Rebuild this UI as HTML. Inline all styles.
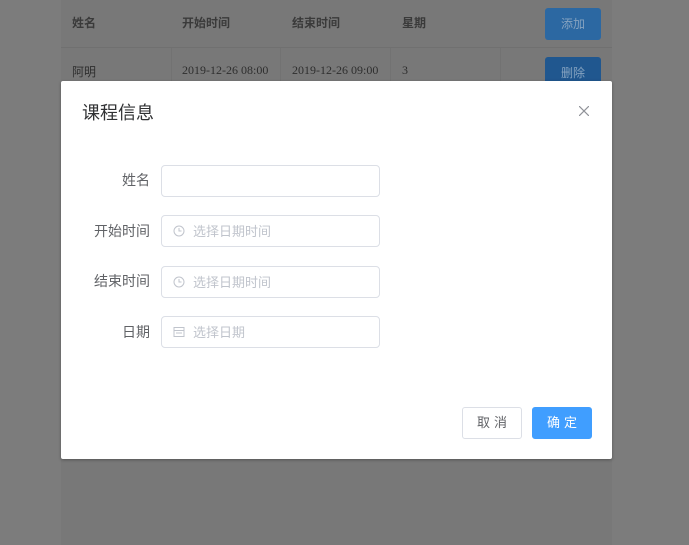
<!DOCTYPE html>
<html><head><meta charset="utf-8"><style>
body{margin:0;width:689px;height:545px;background:#7c7c7c;position:relative;overflow:hidden;font-family:"Liberation Sans","Noto Sans CJK SC",sans-serif;}
.tbl{position:absolute;left:61px;top:0;width:551px;height:545px;background:#787878;}
.th{position:absolute;top:14px;font-size:12px;font-weight:bold;color:#3a3a3a;}
.row{position:absolute;left:0;top:47px;width:551px;height:40px;border-top:1px solid #707070;}
.cell{position:absolute;top:48px;height:40px;border-left:1px solid #727272;}
.td{position:absolute;top:63px;font-size:12px;color:#2e2e2e;font-family:"Liberation Serif","Noto Serif CJK SC",serif;}
.tbtn{position:absolute;left:545px;width:56px;height:32px;border-radius:3px;color:#86a3c0;font-size:12px;text-align:center;line-height:32px;}
.dlg{position:absolute;left:61px;top:81px;width:551px;height:378px;background:#fff;border-radius:2px;box-shadow:0 1px 3px rgba(0,0,0,.3);}
.title{position:absolute;left:21px;top:18px;font-size:18px;color:#303133;}
.lbl{position:absolute;right:462px;font-size:14px;color:#606266;}
.inp{position:absolute;left:100px;width:217px;height:30px;border:1px solid #dcdfe6;border-radius:4px;}
.ph{position:absolute;left:31px;top:5px;font-size:13px;color:#c0c4cc;}
.btn{position:absolute;top:326px;height:30px;border-radius:3px;font-size:13px;text-align:center;line-height:30px;letter-spacing:4px;text-indent:4px;}
</style></head><body>
<div class="tbl">
<div class="th" style="left:11px">姓名</div>
<div class="th" style="left:121px">开始时间</div>
<div class="th" style="left:231px">结束时间</div>
<div class="th" style="left:341px">星期</div>
<div class="row"></div>
<div class="cell" style="left:110px"></div><div class="cell" style="left:219px"></div><div class="cell" style="left:329px"></div><div class="cell" style="left:439px"></div>
<div class="td" style="left:11px;font-family:'Liberation Sans','Noto Sans CJK SC',sans-serif">阿明</div>
<div class="td" style="left:121px">2019-12-26 08:00</div>
<div class="td" style="left:231px">2019-12-26 09:00</div>
<div class="td" style="left:341px">3</div>
</div>
<div class="tbtn" style="top:8px;background:#2c68a2">添加</div>
<div class="tbtn" style="top:57px;background:#20578f">删除</div>
<div class="dlg">
<div class="title">课程信息</div>
<svg style="position:absolute;left:518px;top:25px" width="10" height="10"><path d="M0 0L10 10M10 0L0 10" stroke="#909399" stroke-width="1.2"/></svg>
<div class="lbl" style="top:89px">姓名</div>
<div class="inp" style="top:84px"></div>
<div class="lbl" style="top:140px">开始时间</div>
<div class="inp" style="top:134px"><svg style="position:absolute;left:11px;top:9px" width="12" height="12"><circle cx="6" cy="6" r="5" fill="none" stroke="#c0c4cc"/><path d="M6 3V6H8.5" fill="none" stroke="#c0c4cc"/></svg><span class="ph">选择日期时间</span></div>
<div class="lbl" style="top:190px">结束时间</div>
<div class="inp" style="top:185px"><svg style="position:absolute;left:11px;top:9px" width="12" height="12"><circle cx="6" cy="6" r="5" fill="none" stroke="#c0c4cc"/><path d="M6 3V6H8.5" fill="none" stroke="#c0c4cc"/></svg><span class="ph">选择日期时间</span></div>
<div class="lbl" style="top:241px">日期</div>
<div class="inp" style="top:235px"><svg style="position:absolute;left:11px;top:9px" width="12" height="12"><rect x="1" y="1.5" width="10" height="9" fill="none" stroke="#c0c4cc"/><path d="M1 4.5H11M3 7H9" stroke="#c0c4cc"/></svg><span class="ph">选择日期</span></div>
<div class="btn" style="left:401px;width:58px;border:1px solid #dcdfe6;color:#606266">取消</div>
<div class="btn" style="left:471px;width:58px;background:#409eff;color:#fff;border:1px solid #409eff">确定</div>
</div>
</body></html>
